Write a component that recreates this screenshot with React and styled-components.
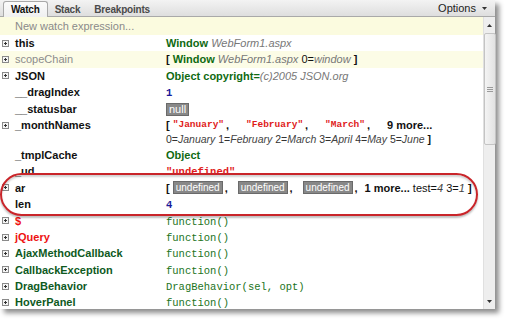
import React from "react";
import styled, { createGlobalStyle } from "styled-components";

const Global = createGlobalStyle`
  html, body { margin: 0; padding: 0; background: #ffffff; }
  body { font-family: "Liberation Sans", Arial, sans-serif; }
`;

const Page = styled.div`
  width: 510px;
  height: 323px;
  background: #fff;
  overflow: hidden;
`;

const Panel = styled.div`
  position: relative;
  width: 495px;
  height: 309px;
  background: #fff;
  box-shadow: 4px 4px 5px rgba(0, 0, 0, 0.45);
  display: flex;
  flex-direction: column;
`;

const Toolbar = styled.div`
  height: 16px;
  flex: none;
  display: flex;
  align-items: flex-end;
  justify-content: space-between;
  background: linear-gradient(#f3f3f3, #dedede);
  border-bottom: 1px solid #a9a9a9;
  padding: 0 8px 0 3px;
`;

const Tabs = styled.div`
  display: flex;
  align-items: flex-end;
`;

const Tab = styled.div`
  font: bold 10px "Liberation Sans", Arial, sans-serif;
  letter-spacing: -0.2px;
  color: ${(p) => (p.$active ? "#111" : "#4a4a4a")};
  padding: 0 ${(p) => (p.$active ? "7px" : "6px")};
  height: 15px;
  line-height: 15px;
  margin-bottom: -1px;
  border: 1px solid ${(p) => (p.$active ? "#a9a9a9" : "transparent")};
  border-bottom: none;
  border-radius: 3px 3px 0 0;
  background: ${(p) => (p.$active ? "linear-gradient(#fbfbfb, #f0f0f0)" : "transparent")};
`;

const Options = styled.div`
  font: 11px "Liberation Sans", Arial, sans-serif;
  color: #222;
  height: 16px;
  line-height: 16px;
  display: flex;
  align-items: center;
  gap: 6px;
`;

const Body = styled.div`
  flex: 1;
  display: flex;
  min-height: 0;
`;

const List = styled.div`
  flex: 1;
  min-width: 0;
  display: flex;
  flex-direction: column;
  overflow: hidden;
`;

const WatchInput = styled.div`
  height: 18px;
  flex: none;
  background: #fbfbdf;
  color: #8a8a8a;
  font: 11px "Liberation Sans", Arial, sans-serif;
  line-height: 18px;
  padding-left: 15px;
`;

const Row = styled.div`
  display: grid;
  grid-template-columns: 15px 151px minmax(0, 1fr);
  height: ${(p) => p.$h || 16.4}px;
  flex: none;
  background: ${(p) => (p.$shade ? "#fcfce6" : "transparent")};
`;

const IconCell = styled.div`
  height: 16.4px;
  display: flex;
  align-items: center;
  padding-left: 2px;
`;

const nameColors = {
  normal: "#111",
  muted: "#8c8c8c",
  red: "#ee1111",
  green: "#0e5a1e",
};

const Name = styled.div`
  font: ${(p) => (p.$tone === "muted" ? "normal" : "bold")} 11px "Liberation Sans", Arial, sans-serif;
  color: ${(p) => nameColors[p.$tone || "normal"]};
  line-height: 16.4px;
  white-space: nowrap;
`;

const Value = styled.div`
  font: 11px "Liberation Sans", Arial, sans-serif;
  color: #111;
  white-space: nowrap;
  line-height: 16.4px;
  min-width: 0;
`;

const Preview = styled.div`
  display: flex;
  align-items: center;
  height: 16.4px;
  white-space: pre;
`;

const Line2 = styled.div`
  line-height: 13.6px;
  font-size: 10.5px;
  color: #333;
`;

const Obj = styled.span`
  color: #0f6a12;
  font-weight: bold;
`;

const Ital = styled.span`
  font-style: italic;
  color: ${(p) => p.$c || "#777"};
`;

const Bracket = styled.span`
  font-weight: bold;
  color: #111;
`;

const Mono = styled.span`
  font-family: "Liberation Mono", "Courier New", monospace;
  font-size: ${(p) => p.$size || 10.5}px;
  color: ${(p) => p.$c || "#1c741c"};
  font-weight: ${(p) => p.$w || "normal"};
`;

const Num = styled.span`
  font-family: "Liberation Mono", "Courier New", monospace;
  font-size: 10.5px;
  font-weight: bold;
  color: #1a1a9a;
`;

const Pill = styled.span`
  display: inline-block;
  background: #888888;
  border: 1px solid #6a6a6a;
  color: #fff;
  font-size: ${(p) => p.$size || 11}px;
  line-height: 11px;
  padding: 0 2px;
  vertical-align: middle;
`;

const Sep = styled.span`
  flex: none;
  box-sizing: border-box;
  width: ${(p) => p.$w || 15}px;
  font-weight: bold;
  padding-left: 2px;
`;

const Bold = styled.span`
  font-weight: bold;
`;

const Scrollbar = styled.div`
  width: 11px;
  flex: none;
  background: #eeeeee;
  border-left: 1px solid #e0e0e0;
  display: flex;
  flex-direction: column;
  align-items: center;
`;

const ArrowBtn = styled.div`
  height: 16px;
  width: 100%;
  display: flex;
  align-items: center;
  justify-content: center;
  flex: none;
`;

const Thumb = styled.div`
  width: 10px;
  height: 110px;
  background: linear-gradient(90deg, #f4f4f4, #e2e2e2);
  border: 1px solid #c4c4c4;
  border-radius: 2px;
  display: flex;
  align-items: center;
  justify-content: center;
  flex: none;
`;

const Track = styled.div`
  flex: 1;
`;

const Ellipse = styled.div`
  position: absolute;
  left: 0px;
  top: 173px;
  width: 474px;
  height: 39px;
  border: 2px solid #c9252a;
  border-radius: 22px;
  box-shadow: 0 2px 2px rgba(0, 0, 0, 0.25), inset 0 2px 2px rgba(0, 0, 0, 0.18);
  pointer-events: none;
`;

const Expander = () => (
  <svg width="7" height="7" viewBox="0 0 7 7">
    <rect x="0.5" y="0.5" width="6" height="6" fill="#f4f4f4" stroke="#8a8a8a" />
    <path d="M2 3.5h3M3.5 2v3" stroke="#333" strokeWidth="1" />
  </svg>
);

const Caret = ({ up }) => (
  <svg width="5" height="3" viewBox="0 0 5 3">
    <path d={up ? "M0 3L2.5 0L5 3Z" : "M0 0L2.5 3L5 0Z"} fill="#333" />
  </svg>
);

const Grip = () => (
  <svg width="6" height="5" viewBox="0 0 6 5">
    <path d="M0 0.5h6M0 2.5h6M0 4.5h6" stroke="#9a9a9a" strokeWidth="1" />
  </svg>
);

const WatchRow = ({ name, tone, expand, shade, h, children }) => (
  <Row $shade={shade} $h={h}>
    <IconCell>{expand ? <Expander /> : null}</IconCell>
    <Name $tone={tone}>{name}</Name>
    <Value>{children}</Value>
  </Row>
);

const months = ["January", "February", "March"];

export default function App() {
  return (
    <Page>
      <Global />
      <Panel>
        <Toolbar>
          <Tabs>
            <Tab $active>Watch</Tab>
            <Tab>Stack</Tab>
            <Tab>Breakpoints</Tab>
          </Tabs>
          <Options>
            Options <Caret />
          </Options>
        </Toolbar>
        <Body>
          <List>
            <WatchInput>New watch expression...</WatchInput>
            <WatchRow name="this" expand>
              <Obj>Window</Obj> <Ital>WebForm1.aspx</Ital>
            </WatchRow>
            <WatchRow name="scopeChain" tone="muted" expand shade>
              <Bracket>[</Bracket> <Obj>Window</Obj> <Ital>WebForm1.aspx</Ital>{" "}
              <span>0=</span>
              <Ital>window</Ital> <Bracket>]</Bracket>
            </WatchRow>
            <WatchRow name="JSON" expand>
              <Obj>Object copyright=</Obj>
              <Ital>(c)2005 JSON.org</Ital>
            </WatchRow>
            <WatchRow name="__dragIndex">
              <Num>1</Num>
            </WatchRow>
            <WatchRow name="__statusbar">
              <Pill>null</Pill>
            </WatchRow>
            <WatchRow name="_monthNames" expand h={30}>
              <Preview>
                <Bracket>[ </Bracket>
                {months.map((m) => (
                  <React.Fragment key={m}>
                    <Mono $c="#e01b1b" $size={9.5} $w="bold">"{m}"</Mono>
                    <Sep $w={22}>,</Sep>
                  </React.Fragment>
                ))}
                <Bold>9 more...</Bold>
              </Preview>
              <Line2>
                0=<Ital $c="#444">January</Ital> 1=<Ital $c="#444">February</Ital> 2=
                <Ital $c="#444">March</Ital> 3=<Ital $c="#444">April</Ital> 4=
                <Ital $c="#444">May</Ital> 5=<Ital $c="#444">June</Ital> <Bracket>]</Bracket>
              </Line2>
            </WatchRow>
            <WatchRow name="_tmplCache">
              <Obj>Object</Obj>
            </WatchRow>
            <WatchRow name="_ud">
              <Mono $c="#e01b1b" $w="bold">"undefined"</Mono>
            </WatchRow>
            <WatchRow name="ar" expand>
              <Preview>
                <Bracket>[ </Bracket>
                <Pill $size={10}>undefined</Pill>
                <Sep>,</Sep>
                <Pill $size={10}>undefined</Pill>
                <Sep>,</Sep>
                <Pill $size={10}>undefined</Pill>
                <Sep $w={12}>,</Sep>
                <Bold>1 more...</Bold>
                <span> test=</span>
                <Ital $c="#444">4</Ital>
                <span> 3=</span>
                <Ital $c="#444">1</Ital>
                <Bracket> ]</Bracket>
              </Preview>
            </WatchRow>
            <WatchRow name="len">
              <Num>4</Num>
            </WatchRow>
            <WatchRow name="$" tone="red" expand>
              <Mono>function()</Mono>
            </WatchRow>
            <WatchRow name="jQuery" tone="red" expand>
              <Mono>function()</Mono>
            </WatchRow>
            <WatchRow name="AjaxMethodCallback" tone="green" expand>
              <Mono>function()</Mono>
            </WatchRow>
            <WatchRow name="CallbackException" tone="green" expand>
              <Mono>function()</Mono>
            </WatchRow>
            <WatchRow name="DragBehavior" tone="green" expand>
              <Mono>DragBehavior(sel, opt)</Mono>
            </WatchRow>
            <WatchRow name="HoverPanel" tone="green" expand>
              <Mono>function()</Mono>
            </WatchRow>
          </List>
          <Scrollbar>
            <ArrowBtn>
              <Caret up />
            </ArrowBtn>
            <Thumb>
              <Grip />
            </Thumb>
            <Track />
            <ArrowBtn>
              <Caret />
            </ArrowBtn>
          </Scrollbar>
        </Body>
        <Ellipse />
      </Panel>
    </Page>
  );
}
